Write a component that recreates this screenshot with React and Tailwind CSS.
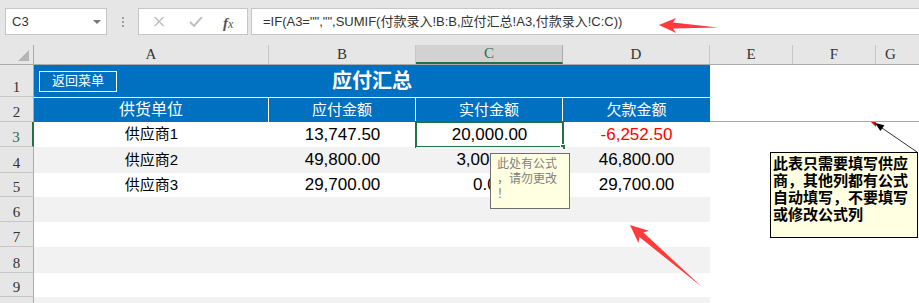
import React from 'react';

const FONT = { fontFamily: '"Liberation Sans", "Noto Sans CJK SC", sans-serif' };

const cols = [
  { key: 'A', w: 'w-[235px]' },
  { key: 'B', w: 'w-[147px]' },
  { key: 'C', w: 'w-[147px]' },
  { key: 'D', w: 'w-[147px]' },
  { key: 'E', w: 'w-[83px]' },
  { key: 'F', w: 'w-[83px]' },
];

const data = [
  { n: 3, h: 'h-[25px]', name: '供应商1', b: '13,747.50', c: '20,000.00', d: '-6,252.50', red: true },
  { n: 4, h: 'h-[26px]', name: '供应商2', b: '49,800.00', c: '3,000.00', d: '46,800.00', stripe: true },
  { n: 5, h: 'h-[24px]', name: '供应商3', b: '29,700.00', c: '0.00', d: '29,700.00' },
];

const empty = [
  { n: 6, h: 'h-[25px]', stripe: true },
  { n: 7, h: 'h-[25px]' },
  { n: 8, h: 'h-[26px]', stripe: true },
  { n: 9, h: 'h-[24px]' },
  { n: '', h: 'h-[24px]', stripe: true },
];

const RowHead = ({ n, active }) => (
  <div
    className={`w-[34px] shrink-0 flex items-end justify-center pb-[1px] bg-[#e6e6e6] border-b border-[#c6c6c6] text-[15px] leading-none ${
      active ? 'text-[#217346] border-r-2 border-r-[#217346]' : 'text-[#333] border-r border-r-[#ababab]'
    }`}
    style={{ fontFamily: '"Liberation Serif", serif' }}
  >
    {n}
  </div>
);

const Cell = ({ w, children, className = '' }) => (
  <div className={`${w} shrink-0 flex items-center justify-center ${className}`}>{children}</div>
);

export default function App() {
  return (
    <div className="relative w-[919px] h-[303px] overflow-hidden bg-white" style={FONT}>
      {/* formula bar */}
      <div className="h-[45px] bg-[#e6e6e6] flex items-start pt-[8px] pl-[5px]">
        <div className="w-[102px] h-[27px] bg-white border border-[#c6c6c6] flex items-center justify-between pl-[6px] pr-[5px]">
          <span className="text-[13px] text-[#333]">C3</span>
          <span className="w-0 h-0 border-l-[4px] border-r-[4px] border-t-[4px] border-l-transparent border-r-transparent border-t-[#777]"></span>
        </div>
        <div className="w-[31px] h-[27px] flex flex-col items-center justify-center gap-[2px]">
          <span className="w-[2px] h-[2px] bg-[#a0a0a0]"></span>
          <span className="w-[2px] h-[2px] bg-[#a0a0a0]"></span>
          <span className="w-[2px] h-[2px] bg-[#a0a0a0]"></span>
        </div>
        <div className="w-[110px] h-[27px] bg-white border border-[#c6c6c6] flex items-center relative">
          <svg width="110" height="25" viewBox="0 0 110 25">
            <path d="M16 8 L25 17 M25 8 L16 17" stroke="#bdbdbd" strokeWidth="1.4" fill="none" />
            <path d="M52 13 L56 17 L64 8" stroke="#bdbdbd" strokeWidth="2" fill="none" />
          </svg>
          <span className="absolute left-[84px] top-[3px] text-[15px] italic text-[#555]" style={{ fontFamily: '"Liberation Serif", serif' }}>
            <span className="font-bold">f</span><span className="text-[12px]">x</span>
          </span>
        </div>
        <div className="ml-[3px] flex-1 h-[27px] bg-white border border-r-0 border-[#c6c6c6] flex items-center pl-[11px] text-[13px] text-[#333] whitespace-nowrap">
          =IF(A3="","",SUMIF(付款录入!B:B,应付汇总!A3,付款录入!C:C))
        </div>
      </div>

      {/* column headers */}
      <div className="flex h-[20px] bg-[#e6e6e6] border-b border-[#ababab]" style={{ fontFamily: '"Liberation Serif", serif' }}>
        <div className="w-[34px] shrink-0 border-r border-[#ababab] relative">
          <span className="absolute right-[4px] bottom-[3px] w-0 h-0" style={{ borderBottom: '11px solid #b5b5b5', borderLeft: '11px solid transparent' }}></span>
        </div>
        {cols.map((c) => (
          <div
            key={c.key}
            className={`${c.w} shrink-0 flex items-center justify-center text-[15px] border-r ${
              c.key === 'C' ? 'bg-[#d2d2d2] text-[#217346] border-[#ababab] border-b-2 border-b-[#217346]' : 'text-[#333] border-[#c6c6c6]'
            }`}
          >
            {c.key}
          </div>
        ))}
        <div className="flex-1 flex items-center pl-[9px] text-[15px] text-[#333]">G</div>
      </div>

      {/* row 1 */}
      <div className="flex h-[32px]">
        <RowHead n={1} />
        <div className="w-[676px] shrink-0 bg-[#0070c0] grid grid-cols-[1fr_auto_1fr] items-center">
          <div className="pl-[5px]">
            <div className="w-[78px] h-[21px] border border-white text-white text-[13px] flex items-center justify-center">
              返回菜单
            </div>
          </div>
          <div className="text-white font-bold text-[20px] leading-none">应付汇总</div>
          <div></div>
        </div>
        <div className="flex-1"></div>
      </div>

      {/* row 2 */}
      <div className="flex h-[25px]">
        <RowHead n={2} />
        <Cell w="w-[235px]" className="bg-[#0070c0] text-white text-[16px] border-t border-r border-white">供货单位</Cell>
        <Cell w="w-[147px]" className="bg-[#0070c0] text-white text-[15px] border-t border-r border-white">应付金额</Cell>
        <Cell w="w-[147px]" className="bg-[#0070c0] text-white text-[15px] border-t border-r border-white">实付金额</Cell>
        <Cell w="w-[147px]" className="bg-[#0070c0] text-white text-[15px] border-t border-white">欠款金额</Cell>
        <div className="flex-1 border-b border-[#a6a6a6]"></div>
      </div>

      {/* data rows */}
      {data.map((r) => {
        const bg = r.stripe ? 'bg-[#f2f2f2]' : 'bg-white';
        return (
          <div key={r.n} className={`flex ${r.h}`}>
            <RowHead n={r.n} active={r.n === 3} />
            <Cell w="w-[235px]" className={`${bg} text-[15px] text-black`}>{r.name}</Cell>
            <Cell w="w-[147px]" className={`${bg} text-[17px] text-black`}>{r.b}</Cell>
            <Cell w="w-[147px]" className={`${bg} text-[17px] text-black relative`}>
              {r.c}
              {r.n === 3 && (
                <>
                  <span className="absolute -left-[1px] -top-[1px] -right-[1px] -bottom-[1px] border-2 border-[#217346]"></span>
                  <span className="absolute -right-[3px] -bottom-[3px] w-[6px] h-[6px] bg-[#217346] border border-white"></span>
                </>
              )}
            </Cell>
            <Cell w="w-[147px]" className={`${bg} text-[17px] ${r.red ? 'text-[#ff0000]' : 'text-black'}`}>{r.d}</Cell>
            <div className="w-[83px] shrink-0"></div>
            <div className="w-[83px] shrink-0 relative">
              {r.n === 3 && (
                <span className="absolute right-0 top-0 w-0 h-0" style={{ borderTop: '5px solid #ff0000', borderLeft: '5px solid transparent' }}></span>
              )}
            </div>
            <div className="flex-1"></div>
          </div>
        );
      })}

      {empty.map((r, i) => (
        <div key={i} className={`flex ${r.h}`}>
          <RowHead n={r.n} />
          <div className={`w-[676px] shrink-0 ${r.stripe ? 'bg-[#f2f2f2]' : 'bg-white'}`}></div>
          <div className="flex-1"></div>
        </div>
      ))}

      {/* comment: formula cell */}
      <div className="absolute left-[490px] top-[153px] w-[80px] h-[56px] bg-[#ffffe1] border border-[#6e6e6e] pl-[6px] pt-[3px] text-[12px] leading-[15px] text-[#7f7f7f]">
        此处有公式<br />，请勿更改<br />！
      </div>

      {/* comment: sheet note */}
      <div className="absolute left-[770px] top-[152px] w-[148px] h-[86px] bg-[#ffffe1] border border-black pl-[2px] pt-[2px] text-[15px] leading-[17px] font-bold text-black whitespace-nowrap">
        此表只需要填写供应<br />商，其他列都有公式<br />自动填写，不要填写<br />或修改公式列
      </div>

      {/* arrows */}
      <svg className="absolute inset-0 pointer-events-none" width="919" height="303" viewBox="0 0 919 303">
        <line x1="917" y1="152" x2="882" y2="128" stroke="#333" strokeWidth="1" />
        <polygon points="875,123 884.4,125.2 880.4,131" fill="#000" />
        <polygon points="659,25 676,18 673,22.5 718,27.5 673,28.5 676,33" fill="#ff3b3b" />
        <polygon points="630,225 648.8,230.7 643.4,232.5 702,287 639.4,237.1 638.4,242.9" fill="#ff3b3b" />
      </svg>
    </div>
  );
}
